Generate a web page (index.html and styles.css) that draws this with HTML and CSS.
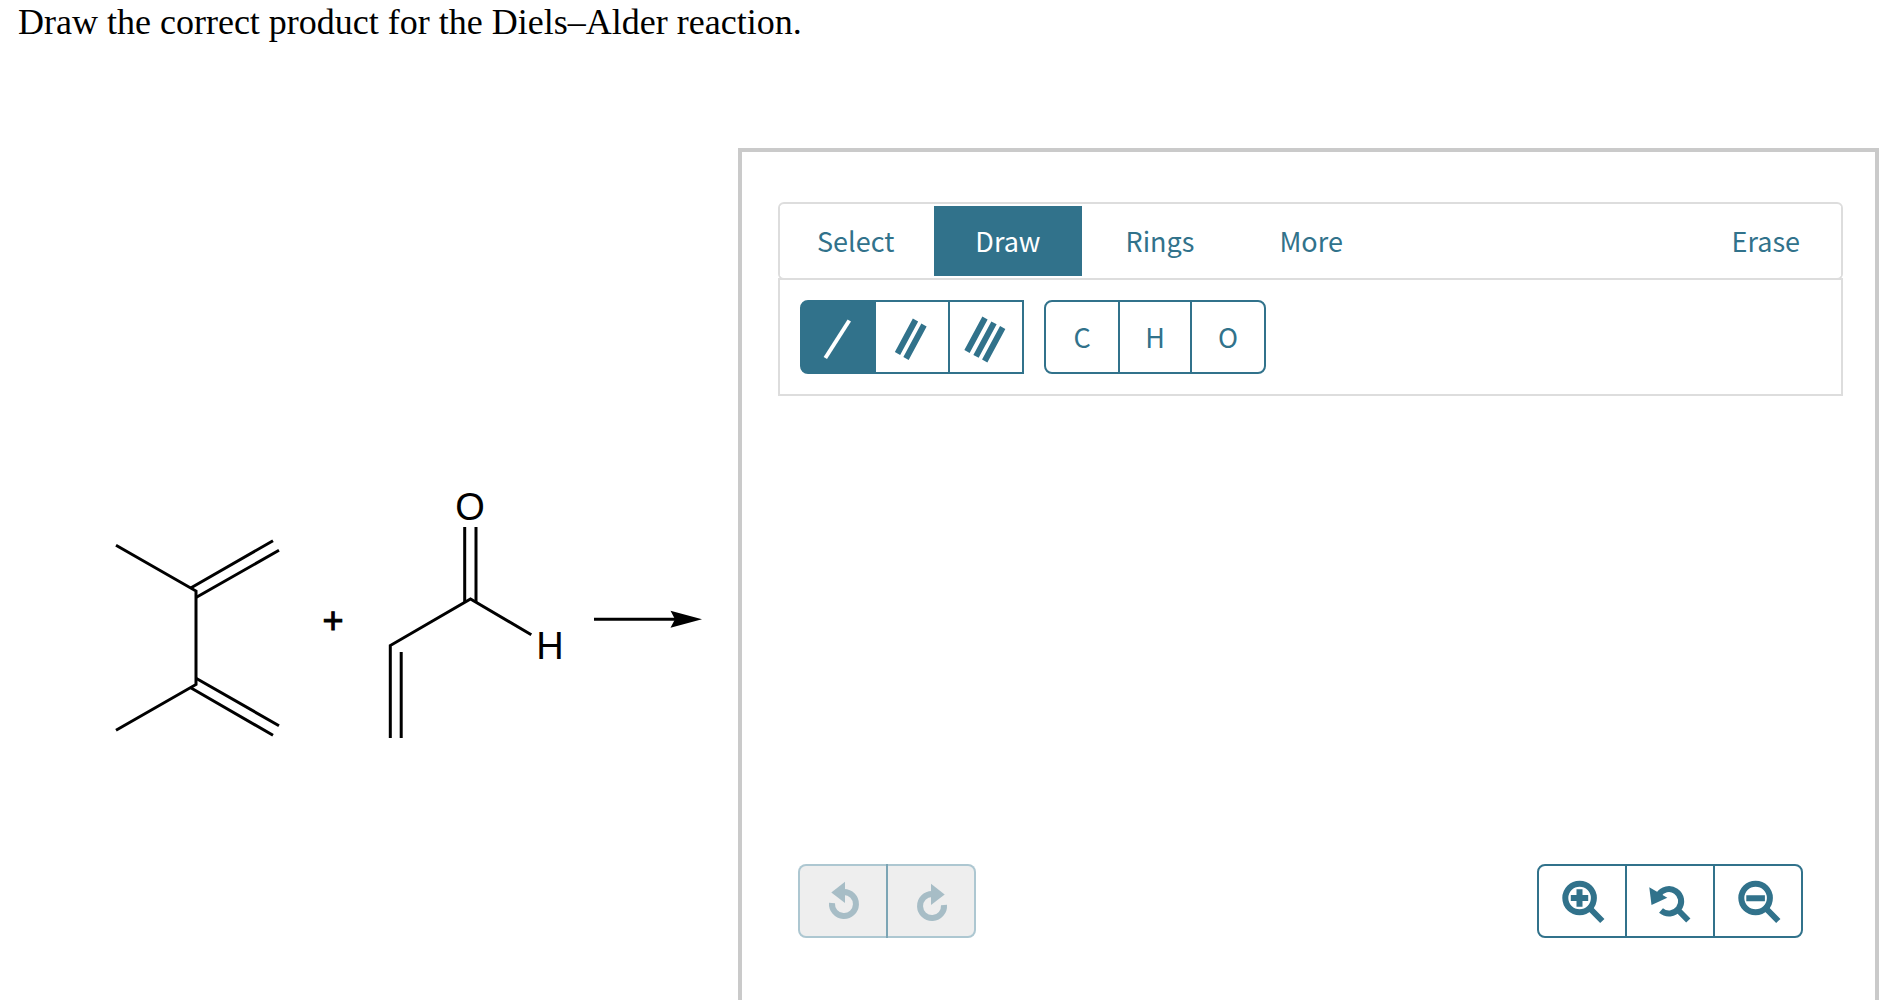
FILE: index.html
```html
<!DOCTYPE html>
<html lang="en">
<head>
    <meta charset="UTF-8">
    <meta name="viewport" content="width=device-width, initial-scale=1.0">
    <title>Diels–Alder reaction</title>
    <link rel="stylesheet" href="styles.css">
</head>
<body>
    <p class="question">Draw the correct product for the Diels–Alder reaction.</p>
    <main class="problem">
        <!-- Reactants and reaction arrow -->
        <svg class="scheme" width="620" height="280" viewBox="100 480 620 280" role="img" aria-label="Reaction scheme">
            <g class="bonds">
                <path d="M116 545.3L196 591V684.5L116 730.3"/>
                <path d="M190.7 588L273 540.7M196 597.5L279 550.3"/>
                <path d="M196 678.3L279 725.7M190.7 687.7L273 735.3"/>
                <path d="M464.7 527V602M476 527V602"/>
                <path d="M531.3 634.7L470.5 599L390.3 645.5V738M401.2 652V738"/>
                <path d="M594 619.3H676"/>
            </g>
            <path d="M702 619.3L670.5 610.7L675 619.3L670.5 627.7Z"/>
            <text class="atom" x="470" y="520">O</text>
            <text class="atom" x="550" y="659">H</text>
            <text class="plus" x="333" y="633">+</text>
        </svg>

        <section class="editor">
            <nav class="tabs">
                <button type="button" class="tab tab-first">Select</button>
                <button type="button" class="tab active">Draw</button>
                <button type="button" class="tab">Rings</button>
                <button type="button" class="tab">More</button>
                <button type="button" class="tab tab-erase">Erase</button>
            </nav>
            <div class="tools">
                <div class="group">
                    <button type="button" class="tool active" aria-label="Single bond">
                        <svg viewBox="2 2 72 70"><path class="thin" d="M49.3 20.5L25.3 58"/></svg>
                    </button>
                    <button type="button" class="tool" aria-label="Double bond">
                        <svg viewBox="2 2 72 70"><path d="M41.5 20L23.5 53.5M50 25L32 58.5"/></svg>
                    </button>
                    <button type="button" class="tool" aria-label="Triple bond">
                        <svg viewBox="2 2 72 70"><path d="M37 18L19 51.5M46 22.8L28 56.3M54.7 27.5L36.7 61"/></svg>
                    </button>
                </div>
                <div class="group rounded">
                    <button type="button" class="tool">C</button>
                    <button type="button" class="tool narrow">H</button>
                    <button type="button" class="tool">O</button>
                </div>
            </div>

            <div class="canvas"></div>

            <div class="controls">
                <div class="group rounded">
                    <button type="button" class="tool wide" disabled aria-label="Undo">
                        <svg viewBox="2 2 86 70"><path d="M34 39A12 12 0 1 0 46 28"/><path class="solid" d="M33.3 28.5L47 17.7V39Z"/></svg>
                    </button>
                    <button type="button" class="tool wide" disabled aria-label="Redo">
                        <svg viewBox="2 2 86 70"><path d="M58 41A12 12 0 1 1 46 30"/><path class="solid" d="M58.7 30.5L45 19.7V41Z"/></svg>
                    </button>
                </div>
                <div class="group rounded">
                    <button type="button" class="tool wide" aria-label="Zoom in">
                        <svg viewBox="2 2 86 70"><circle cx="42.6" cy="34" r="14.3"/><path d="M54 45.5L65.3 57M33.8 34H51.2M42.5 25.3V42.7"/></svg>
                    </button>
                    <button type="button" class="tool wide" aria-label="Reset zoom">
                        <svg viewBox="2 2 86 70"><path d="M36 46.5A12.2 12.2 0 1 0 33.5 31M52.5 45.5L63.3 56.5"/><path class="solid" d="M24.3 23.3L42.3 33.7L26.5 41Z"/></svg>
                    </button>
                    <button type="button" class="tool wide" aria-label="Zoom out">
                        <svg viewBox="2 2 86 70"><circle cx="42.6" cy="34" r="14.3"/><path d="M54 45.5L65.3 57M33.3 34.3H51.9"/></svg>
                    </button>
                </div>
            </div>
        </section>
    </main>
</body>
</html>
```
FILE: styles.css
```css
* {
    box-sizing: border-box;
}
body {
    display: flex;
    flex-direction: column;
    min-height: 100vh;
    margin: 0;
    background-color: #fff;
    color: #000;
}
.question {
    margin: 0;
    padding: 2px 18px 0;
    height: 148px;
    font-family: "Liberation Serif", "Times New Roman", serif;
    font-size: 36px;
    line-height: 40px;
}
.problem {
    display: grid;
    grid-template-columns: 738px 1fr;
    flex: 1;
    padding-right: 13px;
}

/* Reaction scheme */
.scheme {
    margin: 332px 0 0 100px;
}
.bonds {
    fill: none;
    stroke: #000;
    stroke-width: 3;
}
.atom,
.plus {
    font-family: "Liberation Sans", Arial, sans-serif;
    font-size: 38px;
    text-anchor: middle;
}
.plus {
    font-size: 36px;
    stroke: #000;
    stroke-width: 1;
}

/* Structure editor */
.editor {
    padding: 50px 32px 0 36px;
    border: 4px solid #cacaca;
    border-bottom: none;
}
.tabs {
    display: flex;
    gap: 3px;
    height: 78px;
    padding: 2px 0;
    border: 2px solid #ddd;
    border-radius: 6px;
}
button {
    margin: 0;
    padding: 0;
    border: none;
    background-color: #fff;
    color: #31728b;
    font-family: "Noto Sans CJK SC", sans-serif;
    font-size: 27px;
    font-weight: 400;
    line-height: 40px;
    cursor: pointer;
}
.tab {
    padding: 0 41px;
}
.tab-first {
    padding: 0 37px;
}
.tab-erase {
    margin-left: auto;
}
.active {
    background-color: #31728b;
    color: #fff;
}
.tools {
    display: flex;
    gap: 20px;
    margin-top: -2px;
    padding: 20px;
    border: 2px solid #ddd;
}
.group {
    display: flex;
}
.tool {
    width: 76px;
    height: 74px;
    border: 2px solid #31728b;
}
.tool + .tool {
    margin-left: -2px;
}
.tool:first-child {
    border-radius: 8px 0 0 8px;
}
.rounded .tool:last-child {
    border-radius: 0 8px 8px 0;
}
.narrow {
    width: 74px;
}
.wide {
    width: 90px;
}
.tool svg {
    display: block;
    width: 100%;
    height: 100%;
    fill: none;
    stroke: currentColor;
    stroke-width: 6;
}
.tool .thin {
    stroke-width: 4;
}
.tool .solid {
    fill: currentColor;
    stroke: none;
}
.tool:disabled {
    border-color: rgba(49, 114, 139, 0.4);
    background-color: #eee;
    background-clip: padding-box;
    color: #a7bdc6;
    cursor: default;
}
.canvas {
    height: 468px;
}
.controls {
    display: flex;
    justify-content: space-between;
    padding: 0 40px 0 20px;
}
```
